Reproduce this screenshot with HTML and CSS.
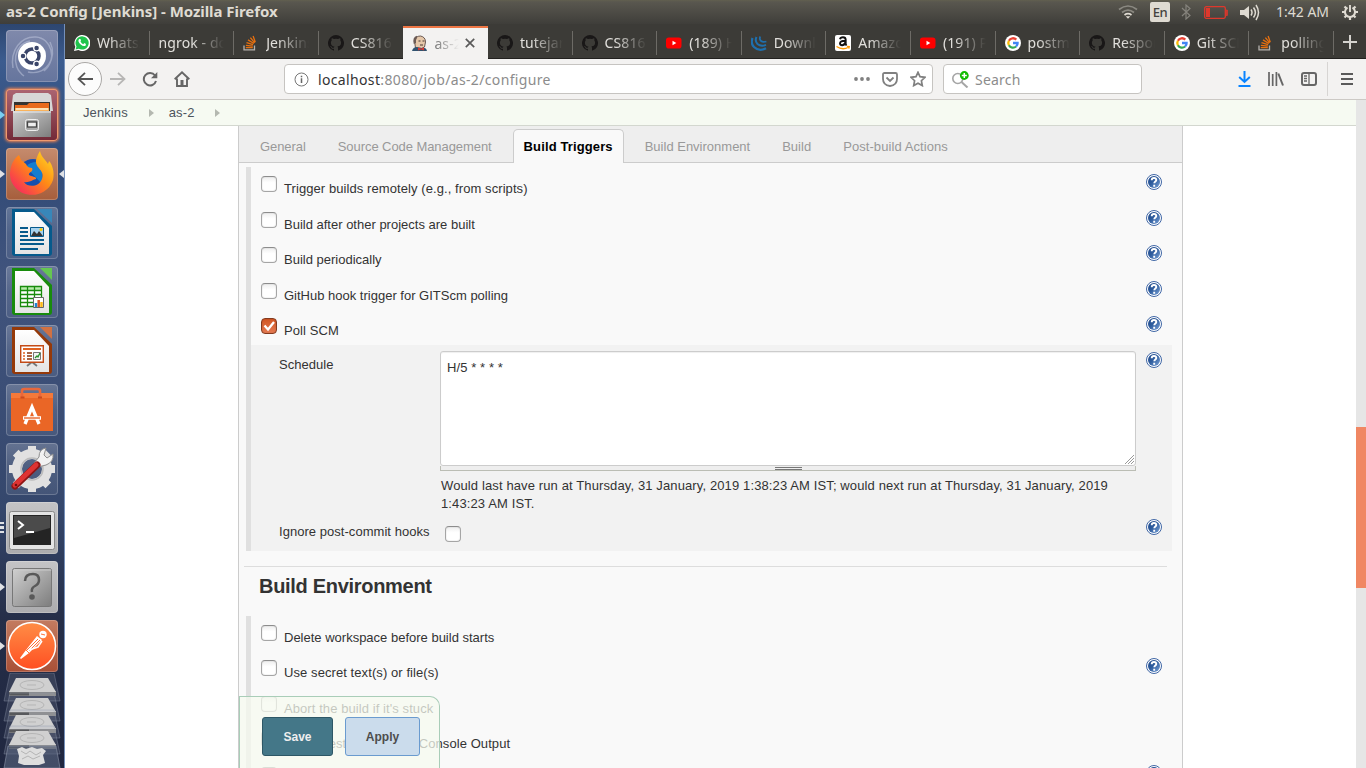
FILE: index.html
```html
<!DOCTYPE html>
<html lang="en">
<head>
<meta charset="utf-8">
<title>as-2 Config [Jenkins]</title>
<link rel="stylesheet" href="styles.css">
</head>
<body>
<svg width="0" height="0" class="defs">
  <defs>
    <linearGradient id="gq" x1="0" y1="0" x2="1" y2="1"><stop offset="0" stop-color="#1d4688"/><stop offset=".45" stop-color="#2f5d9e"/><stop offset="1" stop-color="#7ba3d8"/></linearGradient>
    <linearGradient id="gMetal" x1="0" y1="0" x2="1" y2="1"><stop offset="0" stop-color="#d0d0d0"/><stop offset="1" stop-color="#7d7d7d"/></linearGradient>
    <linearGradient id="gPaper" x1="0" y1="0" x2="0" y2="1"><stop offset="0" stop-color="#fff"/><stop offset="1" stop-color="#e4e4e4"/></linearGradient>
    <linearGradient id="gFox" x1="1" y1="0" x2="0" y2="1"><stop offset="0" stop-color="#ffe226"/><stop offset=".45" stop-color="#ff8a16"/><stop offset="1" stop-color="#f5156c"/></linearGradient>
    <linearGradient id="gPost" x1="0" y1="0" x2="0" y2="1"><stop offset="0" stop-color="#ff8d46"/><stop offset="1" stop-color="#ff4f22"/></linearGradient>
    <symbol id="help" viewBox="0 0 16 16"><circle cx="8" cy="8" r="7.500" fill="#fff" stroke="#3f66a5"/><circle cx="8" cy="8" r="6" fill="url(#gq)"/><path d="M5.700 6.300C5.700 4.600 6.800 4 8 4s2.300.7 2.300 2c0 1.500-2 1.600-2 3.200M8.200 10.700v2" fill="none" stroke="#fff" stroke-width="1.900"/></symbol>
    <symbol id="github" viewBox="0 0 16 16"><path fill="#191717" d="M8 0a8 8 0 0 0-2.500 15.600c.4.1.5-.2.5-.4v-1.400c-2.200.5-2.700-1-2.700-1-.4-.9-.9-1.200-.9-1.200-.7-.5.100-.5.100-.5.800.1 1.200.8 1.200.8.700 1.200 1.900.9 2.300.7.100-.5.300-.9.500-1.100-1.800-.2-3.600-.9-3.600-4 0-.9.300-1.600.8-2.100-.1-.2-.4-1 .1-2.100 0 0 .7-.2 2.200.8a7.500 7.500 0 0 1 4 0c1.500-1 2.200-.8 2.200-.8.400 1.100.2 1.900.1 2.100.500.6.800 1.300.800 2.100 0 3.100-1.900 3.700-3.700 3.900.300.3.600.8.600 1.500v2.300c0 .2.100.5.500.4A8 8 0 0 0 8 0z"/></symbol>
    <symbol id="so" viewBox="0 0 16 16"><path d="M1 10.500v4.300h10.500v-4.300" fill="none" stroke="#b5b2ad" stroke-width="1.300"/><path d="M2.800 12.700h7M2.900 10.300l6.900.8M3.500 7.600l6.600 2M5 4.900l5.900 3.600M7.400 2.600l4.300 5.300M10.100 1l2.200 6.200" stroke="#e8700f" stroke-width="1.300"/></symbol>
    <symbol id="youtube" viewBox="0 0 16 16"><rect y="2.500" width="15.500" height="11" rx="2.800" fill="#f00"/><path d="M6.500 5.800v4.400L10.300 8z" fill="#fff"/></symbol>
    <symbol id="google" viewBox="0 0 16 16"><circle cx="8" cy="8" r="8" fill="#fff"/><g fill="none" stroke-width="2.300"><path d="M11.300 4.600A4.700 4.700 0 0 0 3.900 5.700" stroke="#ea4335"/><path d="M3.900 5.700a4.700 4.700 0 0 0 0 4.600" stroke="#fbbc05"/><path d="M3.900 10.300a4.700 4.700 0 0 0 7.200 1.200" stroke="#34a853"/><path d="M11.100 11.500c1-.9 1.600-2 1.500-3.500H8" stroke="#4285f4"/></g></symbol>
  </defs>
</svg>

<header class="panel">
  <span class="panel-title">as-2 Config [Jenkins] - Mozilla Firefox</span>
  <div class="indicators">
    <svg class="ind-wifi" width="20" height="14" viewBox="0 0 20 14" fill="none" stroke-width="1.700"><path d="M1 4.500q9-7 18 0M4 7.500q6-4.600 12 0" stroke="#8b8982"/><path d="M6.500 10q3.500-2.600 7 0" stroke="#dfdbd2"/><path d="M7.700 11.300h4.600L10 13.700z" fill="#dfdbd2"/></svg>
    <span class="ind-lang">En</span>
    <svg class="ind-bt" width="10" height="16" viewBox="0 0 10 16" fill="none" stroke="#85837c" stroke-width="1.200"><path d="M1 4l8 7.500L5 15V1l4 3.500L1 12"/></svg>
    <svg class="ind-bat" width="24" height="13" viewBox="0 0 24 13"><rect x=".7" y=".7" width="20.600" height="11.600" rx="1.500" fill="none" stroke="#df382c" stroke-width="1.300"/><path d="M22.300 4v5.500h1V4z" stroke="#df382c" fill="none"/><path d="M2 2h4v9H2z" fill="#df382c"/></svg>
    <svg class="ind-vol" width="20" height="17" viewBox="0 0 20 17" fill="none" stroke="#dfdbd2" stroke-width="1.500"><path d="M0 6h4l5-4v13l-5-4H0z" fill="#dfdbd2" stroke="none"/><path d="M11 5.500q2 3 0 6M13.500 3.500q3.800 5 0 10M16 1q5 7.500 0 15"/></svg>
    <span class="ind-time">1:42 AM</span>
    <svg class="ind-gear" width="16" height="16" viewBox="0 0 16 16" fill="none" stroke="#dfdbd2"><path d="M5.500 3.700a5 5 0 1 0 5 0" stroke-width="2"/><path d="M8 1v7" stroke-width="1.900"/><path d="M2.500 2.500l2 2M13.500 2.500l-2 2M0 8h3M13 8h3M2.500 13.500l2-2M13.500 13.500l-2-2M8 13v3" stroke-width="2.200"/></svg>
  </div>
</header>

<div class="desktop">
<nav class="launcher">
  <div class="tile tile-dash"><svg viewBox="0 0 52 52"><g fill="none" stroke="#cdd3e6" opacity=".45"><path d="M7 38C4 20 15 6 30 7s22 22 8 34M18 46C4 36 8 14 24 11M44 12c8 16-4 34-22 30" stroke-width="1.500"/></g><circle cx="26" cy="26" r="14" fill="#fff"/><circle cx="26" cy="26" r="7" fill="none" stroke="#3a4569" stroke-width="3.500"/><g fill="#3a4569" stroke="#fff" stroke-width="1.300"><circle cx="17" cy="26" r="2.900"/><circle cx="30.600" cy="18" r="2.900"/><circle cx="30.600" cy="34" r="2.900"/></g></svg></div>
  <div class="tile tile-files"><svg viewBox="0 0 52 52"><path d="M7 6l3-2h32l3 2 2 16H5z" fill="#d7d7d7"/><path d="M8 13h36v13H8z" fill="#353331"/><path d="M9 16h12l2-2h20v11H9z" fill="#e96a1c"/><path d="M9 19h34v6H9z" fill="#f9b25b"/><path d="M10 20h32" stroke="#fff2d5" stroke-width="1.500"/><path d="M7 22h38v26H7z" fill="url(#gMetal)"/><path d="M7 23h38" stroke="#eee"/><rect x="19.500" y="30.500" width="13" height="11" rx="2" fill="#aaa" stroke="#eee"/><rect x="21.500" y="33" width="9" height="5" fill="#eee" stroke="#444" stroke-width="1.300"/></svg><i class="run run-blue"></i></div>
  <div class="tile tile-fox"><svg viewBox="0 0 52 52"><circle cx="27" cy="25" r="14" fill="#164fae"/><path d="M20 19q3-5 11-5l5 8v14z" fill="#1596e0" opacity=".65"/><path d="M30 12c-1 9 9 9 6 19-3 8-14 9-18 3 5 1 8-2 12-3 1-3-5-2-7-4-1-3 5-3 3-7-2 0-5-1-6-4l-5-4-2-5C6 12 4 20 4 27a22 21 0 0 0 43 5c2-8-1-16-4-19l-1 3C40 12 35 9 34 3c-2 3-3 6-4 9z" fill="url(#gFox)"/></svg><i class="run"></i><i class="run-focus"></i></div>
  <div class="tile"><svg viewBox="0 0 52 52"><path d="M6 2h22l18 17v27q0 3-3 3H9q-3 0-3-3z" fill="#065a8c"/><path d="M9 5h19l15 16v26H9z" fill="url(#gPaper)"/><path d="M31 2h15v14z" fill="#3887b9"/><path d="M14 21h8M14 25h8M14 29h8M14 33h24M14 37h24M14 42h18" stroke="#065a8c" stroke-width="2"/><path d="M24.500 20.500h13v9h-13z" fill="#a7d2ee" stroke="#065a8c"/><path d="M25 29l3-5 3 3 2-3 4 5z" fill="#333"/><circle cx="35" cy="22.500" r="1.500" fill="#fc0"/></svg></div>
  <div class="tile"><svg viewBox="0 0 52 52"><path d="M6 2h22l18 17v27q0 3-3 3H9q-3 0-3-3z" fill="#188b0c"/><path d="M9 5h19l15 16v26H9z" fill="url(#gPaper)"/><path d="M34 2h12v12z" fill="#65c651"/><path d="M14 20h22v21H14z" fill="#fff"/><path d="M14 20h22v4H14z" fill="#b7ebaa"/><path d="M14.500 20.500h21v20h-21zM14 24.500h22M14 28.500h22M14 32.500h22M14 36.500h22M21.500 20v21M28.500 20v21" fill="none" stroke="#188b0c" stroke-width="1.300"/><path d="M27.500 31.500h10v10h-10z" fill="#fff" stroke="#666"/><path d="M30 41v-4" stroke="#2285ce" stroke-width="2.500"/><path d="M32.700 41v-7" stroke="#df551b" stroke-width="2.500"/><path d="M35.500 41v-5" stroke="#fdb915" stroke-width="2.500"/></svg></div>
  <div class="tile"><svg viewBox="0 0 52 52"><path d="M6 2h22l18 17v27q0 3-3 3H9q-3 0-3-3z" fill="#953909"/><path d="M9 5h19l15 16v26H9z" fill="url(#gPaper)"/><path d="M34 2h12v12z" fill="#d17142"/><path d="M21 41l5-4 5 4" fill="none" stroke="#777" stroke-width="1.800"/><path d="M14.700 20.700h22.600v16.600H14.700z" fill="#fff" stroke="#c34b17" stroke-width="1.400"/><path d="M17 24h18" stroke="#df6120" stroke-width="2"/><path d="M17 28h2M17 31h2M17 34h2" stroke="#df6120" stroke-width="1.500"/><path d="M21 28h5M21 31h5M21 34h5" stroke="#8c340a" stroke-width="1.700"/><path d="M27.500 27.500h7v7h-7z" fill="#f4f4f4" stroke="#777"/><path d="M29 33l2-2 1 1 2-4" fill="none" stroke="#27902b" stroke-width="1.300"/></svg></div>
  <div class="tile"><svg viewBox="0 0 52 52"><path d="M5 9h42v38H5z" fill="#ea6626"/><path d="M5 9h42v5H5z" fill="#f4793a"/><path d="M16 14V7q0-2 2-2h14q2 0 2 2v7" fill="none" stroke="#e8683c" stroke-width="2.600"/><path d="M14.500 13.500h4M32 13.500h4" stroke="#c94a1d" stroke-width="2"/><path d="M19 40l7-17 7 17M17 34h18" fill="none" stroke="#fff" stroke-width="3.300"/><path d="M18 34h16" stroke="#e8652a" stroke-width="1.400"/></svg></div>
  <div class="tile"><svg viewBox="0 0 52 52"><circle cx="26" cy="26" r="15" fill="none" stroke="#e1e1e1" stroke-width="10"/><path d="M26 3v7M26 42v7M3 26h7M42 26h7M9.700 9.700l5 5M37.300 37.300l5 5M9.700 42.300l5-5M37.300 14.700l5-5" stroke="#e1e1e1" stroke-width="8"/><circle cx="26" cy="26" r="11" fill="none" stroke="#bcbcbc" stroke-width="1.500"/><path d="M31 24l-3-4 5-6q0-8 7-9l-2 7 3 3 6-4q1 8-7 11l-4 1z" fill="#f2f2f2" stroke="#8e8e8e"/><path d="M9 43l22-21" stroke="#8f1515" stroke-width="7" stroke-linecap="round"/><path d="M9 42l21-20" stroke="#dd3333" stroke-width="5" stroke-linecap="round"/><circle cx="10" cy="42" r="1.300" fill="#701010"/></svg></div>
  <div class="tile tile-gray"><svg viewBox="0 0 52 52"><rect x="3.500" y="9.500" width="45" height="38" rx="2" fill="#e4e4e4" stroke="#888"/><rect x="7" y="13" width="38" height="30" fill="#242424"/><path d="M8 14h36v12L8 36z" fill="#4b4b4b"/><path d="M12 19l5 4-5 4M20 30h8" fill="none" stroke="#fff" stroke-width="2"/></svg><i class="run-multi"></i></div>
  <div class="tile tile-gray"><svg viewBox="0 0 52 52"><rect x="6.500" y="7.500" width="39" height="38" rx="2" fill="url(#gMetal)" stroke="#777"/><path d="M8 9h37" stroke="#ccc"/><path d="M19 20q0-7 8-7 6 0 6 6 0 4-4 6t-3 6" fill="none" stroke="#595959" stroke-width="2.500"/><circle cx="26" cy="36" r="2.800" fill="#595959"/></svg><i class="run"></i></div>
  <div class="tile tile-post"><svg viewBox="0 0 52 52"><circle cx="26" cy="26" r="23.500" fill="url(#gPost)" stroke="#fff" stroke-width="1.500"/><path d="M31 16l5 4-13 13-8 6-1-1 6-8z" fill="#fff"/><path d="M32 19L21 30M34 20L23 31M20 30l3 3" stroke="#ff7139" stroke-width="1"/><path d="M36 21l-4 6-9 3" fill="none" stroke="#fff" stroke-width="1.500"/><circle cx="37" cy="14.500" r="3.700" fill="#fff"/><path d="M35 14l4 1" stroke="#ff7139"/></svg><i class="run"></i></div>
  <svg class="stack" width="58" height="95" viewBox="0 0 58 95">
    <defs><g id="drive"><path d="M7 0h44l6 28H1z" fill="#a8b0c0" fill-opacity=".16" stroke="#8d96aa" stroke-opacity=".4"/><path d="M6 18h47v5H6z" fill="#8b8b8b"/><path d="M6 19.500h20v3H6z" fill="#494949"/><path d="M13 5h32l8 14H6z" fill="#d0d0d0"/><ellipse cx="29" cy="12" rx="12" ry="4.500" fill="none" stroke="#b5b5b5"/><path d="M24 12h9" stroke="#b5b5b5"/></g></defs>
    <use href="#drive"/><use href="#drive" y="20"/><use href="#drive" y="37"/><use href="#drive" y="53"/>
    <path d="M5 73h48l4 22H1z" fill="#5c6880" fill-opacity=".6" stroke="#8d96aa" stroke-opacity=".6"/><path d="M14 76l5-2 4 2 6-2 5 2 5-1 4 3-3 4 2 8-6 2H21l-6-2 1-7z" fill="#dedede"/><path d="M18 78l5 3 4-3 6 4 5-3M19 86l6-3 5 3 7-3" fill="none" stroke="#b5b5b5"/>
  </svg>
</nav>

<main class="browser">
  <div class="tabbar">
    <div class="tab"><svg class="fav" viewBox="0 0 16 16"><path d="M0 16l1.300-4.300A8 8 0 1 1 4.500 15z" fill="#fff"/><path d="M1.500 14.500l1-3A6.600 6.600 0 1 1 4.800 13.700z" fill="#20c44c"/><path d="M5 4.300q1.400-1.500 2 1l-.5 1.300q1 2 2.700 2.600l1.200-1.100q2.400.9 1.300 2.300-2 1.700-5-.9Q3.200 6.300 5 4.300z" fill="#fff"/></svg><span class="tab-text">WhatsApp</span></div>
    <div class="tab"><span class="tab-text">ngrok - download</span></div>
    <div class="tab"><svg class="fav"><use href="#so"/></svg><span class="tab-text">Jenkins</span></div>
    <div class="tab tab-last"><svg class="fav"><use href="#github"/></svg><span class="tab-text">CS816</span></div>
    <div class="tab tab-active"><svg class="fav" viewBox="0 0 16 16"><path d="M3.500 13L2.500 6q1-5 6-5 5 1 5 6l-1 5-4 2z" fill="#e5c7a9" stroke="#5b4944" stroke-width=".9"/><path d="M1.800 9Q0 2 5 .7L5 3 4 5v3z" fill="#6b5b55"/><path d="M6.500 6h2M10.500 6h2M8 10h3" stroke="#493833"/><path d="M0 16q1-4 5-4l5 1q4-1 5 3z" fill="#31536f"/><path d="M6 12.500l3 1 3-1v3l-3-1-3 1z" fill="#d33833"/></svg><span class="tab-text">as-2 Config</span><svg class="close" width="10" height="10" viewBox="0 0 10 10"><path d="M.8.8l8.400 8.400M9.200.8L.8 9.200" stroke="#5a5a5a" stroke-width="1.700"/></svg></div>
    <div class="tab"><svg class="fav"><use href="#github"/></svg><span class="tab-text">tutejar</span></div>
    <div class="tab"><svg class="fav"><use href="#github"/></svg><span class="tab-text">CS816</span></div>
    <div class="tab"><svg class="fav"><use href="#youtube"/></svg><span class="tab-text">(189) How</span></div>
    <div class="tab"><svg class="fav" viewBox="0 0 16 16" fill="none" stroke="#1f70ae"><path d="M1.500 3Q-.5 8.500 3 12q5 5 12 1.200" stroke-width="2.200"/><path d="M5.500 2Q3.600 6 6.500 9q3.500 3 8.500.8" stroke-width="2"/><path d="M9.300 1.500Q8 4 10 6q2 1.600 5.400.5" stroke-width="1.700"/></svg><span class="tab-text">Download</span></div>
    <div class="tab"><svg class="fav" viewBox="0 0 16 16"><rect width="16" height="16" rx="2" fill="#fff"/><path d="M5 4.300q.4-2 3-2t2.700 2.500v4q0 1 .9 1.700M10.500 5.800Q5 5.700 5 8.300q.2 2 2.300 1.900 3.200-.5 3.200-4" fill="none" stroke="#111" stroke-width="1.900"/><path d="M1.500 11.500q6 4 12 .8M12 11.300l2.300.3-.5 2" fill="none" stroke="#f90" stroke-width="1.300"/></svg><span class="tab-text">Amazon</span></div>
    <div class="tab"><svg class="fav"><use href="#youtube"/></svg><span class="tab-text">(191) Post</span></div>
    <div class="tab"><svg class="fav"><use href="#google"/></svg><span class="tab-text">postman</span></div>
    <div class="tab"><svg class="fav"><use href="#github"/></svg><span class="tab-text">Respon</span></div>
    <div class="tab"><svg class="fav"><use href="#google"/></svg><span class="tab-text">Git SCM</span></div>
    <div class="tab"><svg class="fav"><use href="#so"/></svg><span class="tab-text">polling</span></div>
    <svg class="newtab" width="14" height="14" viewBox="0 0 14 14"><path d="M7 0v14M0 7h14" stroke="#d5d3cf" stroke-width="2"/></svg>
  </div>

  <div class="toolbar">
    <span class="back"><svg width="16" height="14" viewBox="0 0 16 14" fill="none" stroke="#555" stroke-width="1.800"><path d="M16 7H1.500M8 .8L1.500 7 8 13.200"/></svg></span>
    <svg class="fwd" width="16" height="14" viewBox="0 0 16 14" fill="none" stroke="#b7b6b5" stroke-width="1.800"><path d="M0 7h14.500M8 .8L14.500 7 8 13.200"/></svg>
    <svg class="reload" width="16" height="16" viewBox="0 0 16 16"><path d="M13 4.500A6.200 6.200 0 1 0 14 10" fill="none" stroke="#666" stroke-width="2"/><path d="M15.300 1v6.300H9z" fill="#666"/></svg>
    <svg class="home" width="16" height="16" viewBox="0 0 16 16" fill="none" stroke="#666" stroke-width="1.900"><path d="M.7 8.300L8 1.300l7.300 7M3 7.500V15h10V7.500"/><path d="M8 9v6" stroke-width="3"/></svg>
    <div class="urlbar">
      <svg width="15" height="15" viewBox="0 0 15 15"><circle cx="7.500" cy="7.500" r="6.500" fill="none" stroke="#777"/><path d="M7.500 6.300V11M7.500 3.800v1.500" stroke="#666" stroke-width="1.500"/></svg>
      <span class="url"><b>localhost</b>:8080/job/as-2/configure</span>
      <svg class="dots" width="16" height="4" viewBox="0 0 16 4" fill="#808080"><circle cx="2" cy="2" r="1.900"/><circle cx="8" cy="2" r="1.900"/><circle cx="14" cy="2" r="1.900"/></svg>
      <svg class="pocket" width="16" height="15" viewBox="0 0 16 15" fill="none" stroke="#808080" stroke-width="1.800"><path d="M2.500 1h11Q15 1 15 2.500V7q0 6-7 7-7-1-7-7V2.500Q1 1 2.500 1z"/><path d="M4.500 5.500L8 9l3.500-3.500"/></svg>
      <svg class="star" width="16" height="16" viewBox="0 0 16 16" fill="none" stroke="#808080" stroke-width="1.700"><path d="M8 1.300l2 4.400 4.900.6-3.500 3.400.9 4.900L8 12.200l-4.300 2.400.9-4.900L1.100 6.300 6 5.700z"/></svg>
    </div>
    <div class="search">
      <svg width="17" height="17" viewBox="0 0 17 17"><circle cx="5.800" cy="7.500" r="5" fill="none" stroke="#a5a5a5" stroke-width="1.600"/><path d="M9.500 11l6 5.500" stroke="#a5a5a5" stroke-width="2"/><circle cx="12.300" cy="4.500" r="4.400" fill="#12bc00"/><path d="M12.300 2v5M9.800 4.500h5" stroke="#fff" stroke-width="1.500"/></svg>
      <span>Search</span>
    </div>
    <div class="tools">
      <svg width="13" height="16" viewBox="0 0 13 16" fill="none" stroke="#0a84ff" stroke-width="2"><path d="M6.500 0v11M1.200 6l5.300 5 5.300-5M.5 15h12"/></svg>
      <svg width="16" height="14" viewBox="0 0 16 14" stroke="#666" stroke-width="2"><path d="M1 0v14M4.700 2v12M8.400 0v14" stroke-width="1.700"/><path d="M10.300 1.500L15 13.500"/></svg>
      <svg width="16" height="14" viewBox="0 0 16 14" fill="none" stroke="#666"><rect x="1" y="1" width="14" height="12" rx="2" stroke-width="2"/><path d="M8 1v12M3 4h3M3 6.500h3M3 9h3" stroke-width="1.300"/></svg>
      <span class="menu"><svg width="12" height="12" viewBox="0 0 12 12" stroke="#5a5a5a" stroke-width="2"><path d="M0 1h12M0 6h12M0 11h12"/></svg></span>
    </div>
  </div>

  <div class="viewport">
  <div class="page">
    <div class="crumbs"><span>Jenkins</span><i></i><span>as-2</span><i></i></div>
    <div class="config">
      <div class="ctabs"><span class="tight">General</span><span class="tight">Source Code Management</span><span class="on">Build Triggers</span><span>Build Environment</span><span>Build</span><span class="loose">Post-build Actions</span></div>
      <section class="block">
        <div class="opt"><i class="cb"></i><label class="loose">Trigger builds remotely (e.g., from scripts)</label><svg class="help"><use href="#help"/></svg></div>
        <div class="opt"><i class="cb"></i><label>Build after other projects are built</label><svg class="help"><use href="#help"/></svg></div>
        <div class="opt"><i class="cb"></i><label>Build periodically</label><svg class="help"><use href="#help"/></svg></div>
        <div class="opt"><i class="cb"></i><label>GitHub hook trigger for GITScm polling</label><svg class="help"><use href="#help"/></svg></div>
        <div class="opt"><i class="cb cb-on"><svg width="16" height="16" viewBox="0 0 16 16"><path d="M3.500 7.500l3.500 4L13 4" fill="none" stroke="#fff" stroke-width="2.300"/></svg></i><label class="loose">Poll SCM</label><svg class="help"><use href="#help"/></svg></div>
        <div class="nested">
          <div class="field"><label>Schedule</label>
            <div class="control">
              <div class="area">H/5 * * * *<svg class="grip" width="9" height="9" viewBox="0 0 9 9" stroke="#999"><path d="M0 9L9 0M3 9l6-6M6 9l3-3"/></svg></div>
              <div class="drag"><i></i></div>
              <p>Would last have run at Thursday, 31 January, 2019 1:38:23 AM IST; would next run at Thursday, 31 January, 2019 1:43:23 AM IST.</p>
            </div>
            <svg class="help"><use href="#help"/></svg></div>
          <div class="field field-ignore"><label>Ignore post-commit hooks</label><div class="control"><i class="cb"></i></div><svg class="help"><use href="#help"/></svg></div>
        </div>
      </section>
      <h2>Build Environment</h2>
      <section class="block">
        <div class="opt"><i class="cb"></i><label>Delete workspace before build starts</label></div>
        <div class="opt"><i class="cb"></i><label class="loose">Use secret text(s) or file(s)</label><svg class="help"><use href="#help"/></svg></div>
        <div class="opt"><i class="cb"></i><label class="loose">Abort the build if it's stuck</label></div>
        <div class="opt"><i class="cb"></i><label class="loose">Add timestamps to the Console Output</label></div>
        <div class="opt"><i class="cb"></i><label></label><svg class="help"><use href="#help"/></svg></div>
      </section>
    </div>
    <div class="savebar"><span class="btn save">Save</span><span class="btn apply">Apply</span></div>
  </div>
  <div class="scroll"><div class="thumb"></div></div>
  </div>
</main>
</div>
</body>
</html>
```
FILE: styles.css
```css
* { box-sizing: border-box; }
body { margin: 0; width: 1366px; height: 768px; overflow: hidden; background: #fff; font-family: "Liberation Sans", Arial, sans-serif; font-size: 13px; color: #333; }
svg { display: block; flex: none; }
.defs { position: absolute; }

.panel { height: 24px; display: flex; justify-content: space-between; align-items: center; padding: 0 8px 0 6px; background: linear-gradient(#62604f 0, #59574f 2px, #3f3e3a 100%); color: #dfdbd2; font-family: "Noto Sans", "Open Sans", sans-serif; }
.panel-title { font-size: 15px; line-height: 22px; margin-top: -2px; font-weight: 700; letter-spacing: -.05px; }
.indicators { display: flex; align-items: center; height: 24px; }
.ind-lang { width: 20px; height: 20px; margin-left: 12px; border-radius: 2px; background: #dfdbd2; color: #45433e; font-size: 13px; font-weight: 500; line-height: 21px; text-align: center; letter-spacing: -.5px; }
.ind-bt { margin-left: 11px; }
.ind-bat { margin-left: 13px; }
.ind-vol { margin-left: 12px; }
.ind-time { width: 54px; margin: -2px 12px 0 16px; font-size: 14px; white-space: nowrap; }

.desktop { display: flex; height: 744px; }
.launcher { width: 65px; flex: none; padding: 6px 0 0 6px; display: flex; flex-direction: column; gap: 7px; overflow: hidden; border-right: 1px solid #7590ba; background: linear-gradient(#2d4670 0, #3c5c8f 5%, #304a77 18%, #41547d 34%, #3b4e76 50%, #35476c 65%, #252e48 80%, #202740 100%); }
.tile { position: relative; width: 52px; height: 52px; flex: none; border-radius: 4px; background: linear-gradient(#ffffff38, #ffffff1c 50%, #ffffff12); box-shadow: inset 0 0 0 1px #ffffff35; }
.tile svg { width: 52px; height: 52px; }
.tile-dash { background: linear-gradient(#8089ab, #66759d); }
.tile-files { background: linear-gradient(#ac6572, #722937); box-shadow: inset 0 0 0 1px #f1996d, 0 0 3px 1px #ef8451; }
.tile-fox { background: linear-gradient(#c58b6d, #a65e3c); }
.tile-gray { background: linear-gradient(#c4c4c6, #acacae); }
.tile-post { background: linear-gradient(#c37b60, #a85037); }
.run, .run-focus { position: absolute; left: -6px; top: 22px; border: solid transparent; border-width: 4px 0 4px 5px; border-left-color: #dfe1e5; }
.run-blue { border-left-color: #79cff2; }
.run-focus { left: 53px; border-width: 4px 5px 4px 0; border-right-color: #dfe1e5; }
.run-multi { position: absolute; left: -6px; top: 20px; width: 4px; height: 11px; background: repeating-linear-gradient(#dfe1e5 0 2px, transparent 2px 4.5px); }
.stack { margin: -6px 0 0 -3px; }

.browser { flex: 1; min-width: 0; display: flex; flex-direction: column; background: #fff; }
.tabbar { height: 35px; display: flex; background: #3c3b37; border-bottom: 1px solid #22211f; font-family: "Noto Sans", "Open Sans", sans-serif; font-size: 14px; color: #e2e0dc; }
.tab { position: relative; width: 84.6px; flex: none; display: flex; align-items: center; gap: 7px; padding: 3px 10px 0 9px; }
.tab::after { content: ""; position: absolute; right: 0; top: 7px; width: 1px; height: 24px; background: #6d6b66; }
.tab-last::after, .tab-active::after { display: none; }
.fav { width: 16px; height: 16px; }
.tab-text { flex: 1; overflow: hidden; white-space: nowrap; letter-spacing: .1px; -webkit-mask-image: linear-gradient(90deg, #000 calc(100% - 32px), transparent); mask-image: linear-gradient(90deg, #000 calc(100% - 32px), transparent); }
.tab-active { margin-top: 2px; height: 33px; background: #f3f2f1; border-top: 2px solid #ee7645; padding: 0 13px 1px 9px; gap: 6px; color: #4c4c4c; }
.newtab { margin: 11px 0 0 9px; }

.toolbar { height: 41px; display: flex; align-items: center; padding-left: 3px; background: #f3f2f1; border-bottom: 1px solid #ccc9c5; font-family: "Noto Sans", "Open Sans", sans-serif; font-size: 14px; }
.back { width: 34px; height: 34px; display: flex; align-items: center; justify-content: center; border: 1px solid #aaa8a6; border-radius: 50%; background: #fcfcfc; }
.fwd { margin-left: 8px; }
.reload { margin-left: 16px; }
.home { margin-left: 16px; }
.urlbar, .search { height: 30px; display: flex; align-items: center; border: 1px solid #c6c4c1; border-radius: 4px; background: #fff; }
.urlbar { width: 649px; margin-left: 94px; padding: 0 6px 0 9px; gap: 9px; }
.url { flex: 1; color: #8c8c8c; letter-spacing: .35px; }
.url b { font-weight: 400; color: #333; }
.dots { margin-right: 1px; }
.pocket { margin-left: 2px; }
.star { margin-left: 3px; }
.search { width: 199px; margin-left: 10px; padding-left: 8px; gap: 6px; color: #8c8c8c; letter-spacing: .2px; }
.tools { margin-left: auto; height: 40px; display: flex; align-items: center; gap: 17px; }
.menu { height: 34px; display: flex; align-items: center; padding: 0 13px; margin-left: -7px; border-left: 1px solid #d7d5d3; }

.viewport { flex: 1; min-height: 0; display: flex; }
.page { position: relative; flex: 1; display: flex; flex-direction: column; overflow: hidden; }
.crumbs { height: 26px; flex: none; display: flex; align-items: center; padding-left: 18px; background: #f6faf2; border-bottom: 1px solid #d3d7cf; color: #4d545d; line-height: 26px; letter-spacing: .1px; }
.crumbs i { margin: 0 15px 0 21px; border: solid transparent; border-width: 4px 0 4px 5px; border-left-color: #b4b8b0; }
.config { width: 945px; flex: 1; margin-left: 173px; border: solid #ccc; border-width: 0 1px; background: #f9f9f9; overflow: hidden; }
.ctabs { height: 37px; display: flex; align-items: flex-end; padding-left: 10px; background: #eee; border-bottom: 1px solid #ccc; color: #999; line-height: 33px; }
.ctabs span { height: 34px; flex: none; padding: 0 10px; border: 1px solid transparent; margin-right: 10px; margin-bottom: -1px; white-space: nowrap; }
.ctabs .tight { letter-spacing: -.07px; }
.ctabs .on { background: #f9f9f9; border-color: #ccc; border-bottom: 0; border-radius: 5px 5px 0 0; color: #000; font-weight: 700; letter-spacing: .12px; }
.loose { letter-spacing: .08px; }
.block { margin: 4px 10px 0 7px; border-left: 5px solid #e0e0e0; }
.opt { height: 35.5px; display: grid; grid-template-columns: 23px 1fr 16px; padding: 0 10px; align-items: start; }
.opt label { padding-top: 13px; line-height: 17px; }
.cb { width: 16px; height: 16px; margin-top: 9px; display: block; border: 1px solid #a5a5a5; border-top-color: #8c8c8c; border-radius: 4px; background: linear-gradient(#eee, #fff 40%); box-shadow: inset 0 0 0 1px #0000000a; }
.cb-on { border-color: #843a1e; background: linear-gradient(#d25623, #e47a52); }
.cb-on svg { margin: -1px; }
.help { width: 16px; height: 16px; margin-top: 7px; }
.nested { height: 206px; background: #f2f2f2; padding: 6px 10px 0 28px; }
.field { display: grid; grid-template-columns: 161px 696px 16px; column-gap: 0; justify-content: start; }
.field > .help { margin: 1px 0 0 10px; width: 16px; }
.field > label { line-height: 17px; padding-top: 5px; letter-spacing: .04px; }
.area { position: relative; height: 115px; padding: 7px 6px; border: 1px solid #ccc; border-radius: 3px; background: #fff; line-height: 17px; letter-spacing: .1px; box-shadow: inset 0 1px 1px #0001; }
.grip { position: absolute; right: 1px; bottom: 1px; }
.drag { height: 5px; border: 1px solid #bbbdb4; border-top: 0; background: #eee; display: flex; justify-content: center; }
.drag i { width: 27px; height: 3px; margin-top: 1px; border: solid #777; border-width: 1px 0; }
.field p { margin: 6px 0 0; line-height: 18px; padding-left: 1px; letter-spacing: .12px; }
.field-ignore { margin-top: 6px; }
.field-ignore > label { padding-top: 4px; }
.field-ignore .cb { margin: 7px 0 0 5px; }
.field-ignore > .help { margin-top: 0; }
h2 { margin: 15px 15px 0 5px; padding: 7px 0 0 15px; height: 46px; border-top: 1px solid #ddd; font-size: 20px; line-height: 24px; letter-spacing: -.3px; color: #333; }
.savebar { position: absolute; left: 174px; bottom: 0; width: 201px; height: 72px; display: flex; gap: 12px; padding: 20px 0 0 22px; border: 1px solid #a9cdb8; border-bottom: 0; border-radius: 0 10px 0 0; background: rgba(245, 249, 239, .75); }
.btn { height: 39px; border-radius: 3px; border: 1px solid; font-size: 12px; font-weight: 700; line-height: 38px; text-align: center; }
.save { width: 71px; background: #447788; border-color: #2d5766; color: #eee; }
.apply { width: 75px; background: #cbdcec; border-color: #6a9bcf; color: #4d4d4d; }
.scroll { width: 10px; background: #e6e6e6; padding-top: 327px; }
.thumb { height: 161px; background: #f08763; }
```
